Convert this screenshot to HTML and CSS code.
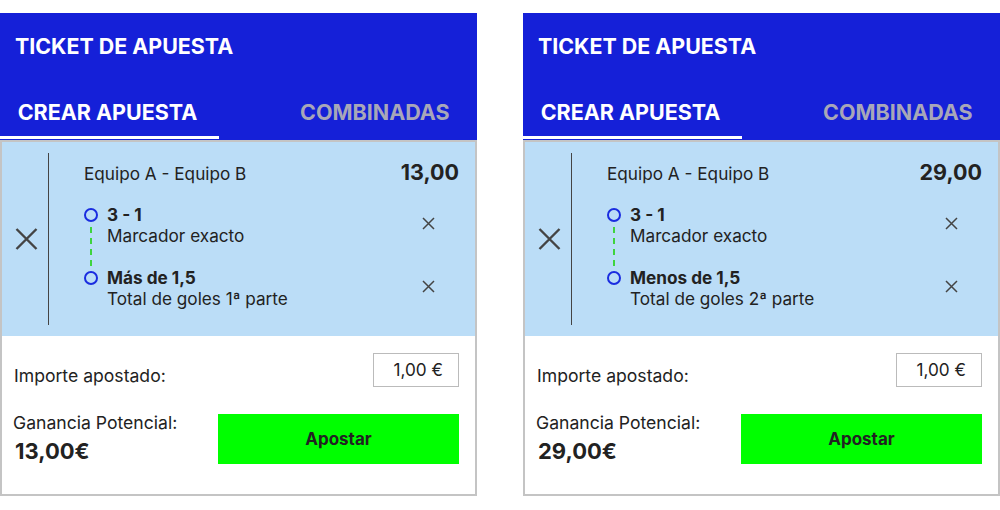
FILE: index.html
```html
<!DOCTYPE html>
<html lang="es">
<head>
<meta charset="utf-8">
<title>Ticket de apuesta</title>
<link rel="stylesheet" href="styles.css">
</head>
<body>
<div class="page">
  <section class="card">
    <header class="head">
      <h1 class="title">TICKET DE APUESTA</h1>
      <nav class="tabs">
        <div class="tab active">CREAR APUESTA</div>
        <div class="tab other">COMBINADAS</div>
      </nav>
    </header>
    <div class="body">
      <div class="bet">
        <div class="remove">
          <svg width="23" height="22" viewBox="0 0 23 22"><path d="M1.5 1L21.5 21M21.5 1L1.5 21" stroke="#444" stroke-width="2.4" fill="none"/></svg>
        </div>
        <div class="detail">
          <div class="match"><span class="teams">Equipo A - Equipo B</span><span class="odds">13,00</span></div>
          <div class="sels">
            <div class="sel">
              <span class="dot"></span>
              <div class="seltext"><div class="selname">3 - 1</div><div class="seltype">Marcador exacto</div></div>
              <svg class="x" width="13" height="13" viewBox="0 0 13 13"><path d="M1 1L12 12M12 1L1 12" stroke="#444" stroke-width="1.5" fill="none"/></svg>
            </div>
            <div class="sel">
              <span class="dot"></span>
              <div class="seltext"><div class="selname">Más de 1,5</div><div class="seltype">Total de goles 1ª parte</div></div>
              <svg class="x" width="13" height="13" viewBox="0 0 13 13"><path d="M1 1L12 12M12 1L1 12" stroke="#444" stroke-width="1.5" fill="none"/></svg>
            </div>
            <span class="link"></span>
          </div>
        </div>
      </div>
      <div class="foot">
        <div class="row amount"><span class="label">Importe apostado:</span><div class="input">1,00 €</div></div>
        <div class="row gain">
          <div class="gaininfo"><div class="label">Ganancia Potencial:</div><div class="gainval">13,00€</div></div>
          <button class="btn">Apostar</button>
        </div>
      </div>
    </div>
  </section>

  <section class="card">
    <header class="head">
      <h1 class="title">TICKET DE APUESTA</h1>
      <nav class="tabs">
        <div class="tab active">CREAR APUESTA</div>
        <div class="tab other">COMBINADAS</div>
      </nav>
    </header>
    <div class="body">
      <div class="bet">
        <div class="remove">
          <svg width="23" height="22" viewBox="0 0 23 22"><path d="M1.5 1L21.5 21M21.5 1L1.5 21" stroke="#444" stroke-width="2.4" fill="none"/></svg>
        </div>
        <div class="detail">
          <div class="match"><span class="teams">Equipo A - Equipo B</span><span class="odds">29,00</span></div>
          <div class="sels">
            <div class="sel">
              <span class="dot"></span>
              <div class="seltext"><div class="selname">3 - 1</div><div class="seltype">Marcador exacto</div></div>
              <svg class="x" width="13" height="13" viewBox="0 0 13 13"><path d="M1 1L12 12M12 1L1 12" stroke="#444" stroke-width="1.5" fill="none"/></svg>
            </div>
            <div class="sel">
              <span class="dot"></span>
              <div class="seltext"><div class="selname">Menos de 1,5</div><div class="seltype">Total de goles 2ª parte</div></div>
              <svg class="x" width="13" height="13" viewBox="0 0 13 13"><path d="M1 1L12 12M12 1L1 12" stroke="#444" stroke-width="1.5" fill="none"/></svg>
            </div>
            <span class="link"></span>
          </div>
        </div>
      </div>
      <div class="foot">
        <div class="row amount"><span class="label">Importe apostado:</span><div class="input">1,00 €</div></div>
        <div class="row gain">
          <div class="gaininfo"><div class="label">Ganancia Potencial:</div><div class="gainval">29,00€</div></div>
          <button class="btn">Apostar</button>
        </div>
      </div>
    </div>
  </section>
</div>
</body>
</html>
```

FILE: styles.css
```css
* { box-sizing: border-box; }
html, body { margin: 0; padding: 0; background: #fff; }
body { font-family: Inter, "Noto Sans", sans-serif; color: #222; }

.page {
  display: flex;
  gap: 46px;
  padding-top: 13px;
}
.card { width: 477px; }

.head {
  background: #1520d8;
  height: 127px;
  display: flex;
  flex-direction: column;
  justify-content: space-between;
}
.title {
  margin: 0;
  padding: 20px 15px 0;
  font-size: 21.4px;
  line-height: 26px;
  font-weight: 700;
  color: #fff;
}
.tabs {
  display: flex;
  align-items: flex-end;
  padding-bottom: 1px;
}
.tab {
  font-size: 21.5px;
  line-height: 24px;
  font-weight: 700;
  padding-bottom: 12px;
  border-bottom: 3px solid transparent;
}
.tab.active {
  width: 219px;
  padding-right: 4px;
  text-align: center;
  color: #fff;
  border-bottom-color: #fff;
}
.tab.other {
  padding-left: 81px;
  color: #a8a7b8;
}

.body {
  border: 2px solid #c4c4c4;
  height: 356px;
  display: flex;
  flex-direction: column;
}
.bet {
  background: #bbddf7;
  height: 194px;
  display: flex;
  padding: 11px 0;
}
.remove {
  width: 47px;
  border-right: 1px solid #444;
  display: flex;
  align-items: center;
  justify-content: center;
}
.remove svg { margin-top: 0; margin-left: 2px; }
.detail {
  flex: 1;
  padding: 0 16px 0 35px;
}
.match {
  display: flex;
  justify-content: space-between;
  align-items: baseline;
  margin-top: 7px;
}
.teams { font-size: 17.2px; line-height: 24px; }
.odds { font-size: 21.5px; line-height: 24px; font-weight: 700; }

.sels { position: relative; margin-top: 18px; }
.sel {
  display: flex;
  align-items: flex-start;
  height: 63px;
}
.dot {
  width: 14px;
  height: 14px;
  border: 2px solid #1a2ce0;
  border-radius: 50%;
  margin-top: 4px;
  flex: none;
}
.seltext { flex: 1; padding-left: 9px; }
.selname { font-size: 17.2px; line-height: 21px; font-weight: 700; }
.seltype { font-size: 17.2px; line-height: 22px; }
.x { margin: 13px 24px 0 0; flex: none; }
.link {
  position: absolute;
  left: 6px;
  top: 23px;
  height: 39px;
  border-left: 2px dashed #3ed43e;
}

.foot {
  flex: 1;
  background: #fff;
  padding: 17px 16px 0 12px;
}
.row { display: flex; justify-content: space-between; align-items: flex-start; }
.amount .label { margin-top: 11.5px; }
.label { font-size: 17.6px; line-height: 22px; }
.input {
  width: 86px;
  height: 34px;
  border: 1px solid #bbb;
  font-size: 17.2px;
  line-height: 32px;
  text-align: right;
  padding-right: 15px;
}
.gain { margin-top: 27px; }
.gaininfo { margin-top: -2px; }
.gaininfo .label { margin-left: -1px; }
.gainval { font-size: 22px; line-height: 24px; font-weight: 700; margin-top: 5px; margin-left: 1px; }
.btn {
  width: 241px;
  height: 50px;
  border: 0;
  padding: 0;
  background: #00ff00;
  font-family: Inter, "Noto Sans", sans-serif;
  font-size: 17px;
  font-weight: 700;
  color: #222;
  cursor: pointer;
}
```
